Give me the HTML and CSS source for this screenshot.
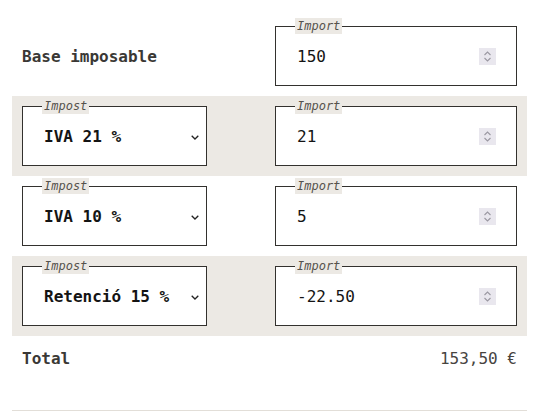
FILE: index.html
```html
<!DOCTYPE html>
<html lang="ca">
<head>
<meta charset="utf-8">
<title>Impostos</title>
<link rel="stylesheet" href="styles.css">
</head>
<body>
<div class="sheet">
  <div class="row">
    <div class="row-label">Base imposable</div>
    <div class="field">
      <span class="legend">Import</span>
      <span class="value">150</span>
      <span class="spin"><svg viewBox="0 0 17 17" width="17" height="17"><path d="M5.5 7 L8.5 4 L11.5 7 M5.5 10 L8.5 13 L11.5 10" fill="none" stroke="#9a98a2" stroke-width="1.1"/></svg></span>
    </div>
  </div>
  <div class="row alt">
    <div class="field select">
      <span class="legend">Impost</span>
      <span class="value strong">IVA 21 %</span>
      <span class="chev"><svg viewBox="0 0 8 5" width="8" height="5"><path d="M0.7 0.7 L4 4 L7.3 0.7" fill="none" stroke="#222" stroke-width="1.3"/></svg></span>
    </div>
    <div class="field">
      <span class="legend">Import</span>
      <span class="value">21</span>
      <span class="spin"><svg viewBox="0 0 17 17" width="17" height="17"><path d="M5.5 7 L8.5 4 L11.5 7 M5.5 10 L8.5 13 L11.5 10" fill="none" stroke="#9a98a2" stroke-width="1.1"/></svg></span>
    </div>
  </div>
  <div class="row">
    <div class="field select">
      <span class="legend">Impost</span>
      <span class="value strong">IVA 10 %</span>
      <span class="chev"><svg viewBox="0 0 8 5" width="8" height="5"><path d="M0.7 0.7 L4 4 L7.3 0.7" fill="none" stroke="#222" stroke-width="1.3"/></svg></span>
    </div>
    <div class="field">
      <span class="legend">Import</span>
      <span class="value">5</span>
      <span class="spin"><svg viewBox="0 0 17 17" width="17" height="17"><path d="M5.5 7 L8.5 4 L11.5 7 M5.5 10 L8.5 13 L11.5 10" fill="none" stroke="#9a98a2" stroke-width="1.1"/></svg></span>
    </div>
  </div>
  <div class="row alt">
    <div class="field select">
      <span class="legend">Impost</span>
      <span class="value strong">Retenció 15 %</span>
      <span class="chev"><svg viewBox="0 0 8 5" width="8" height="5"><path d="M0.7 0.7 L4 4 L7.3 0.7" fill="none" stroke="#222" stroke-width="1.3"/></svg></span>
    </div>
    <div class="field">
      <span class="legend">Import</span>
      <span class="value">-22.50</span>
      <span class="spin"><svg viewBox="0 0 17 17" width="17" height="17"><path d="M5.5 7 L8.5 4 L11.5 7 M5.5 10 L8.5 13 L11.5 10" fill="none" stroke="#9a98a2" stroke-width="1.1"/></svg></span>
    </div>
  </div>
  <div class="total">
    <span class="total-label">Total</span>
    <span class="total-value">153,50 €</span>
  </div>
  <div class="rule"></div>
</div>
</body>
</html>
```
FILE: styles.css
```css
html, body {
  margin: 0;
  padding: 0;
  background: #ffffff;
}
body {
  font-family: "DejaVu Sans Mono", "Liberation Mono", monospace;
  color: #2f2d2a;
}
.sheet {
  padding: 16px 8px 0 12px;
}
.row {
  display: grid;
  grid-template-columns: 185px 242px;
  column-gap: 68px;
  align-items: center;
  height: 80px;
  padding: 0 10px;
  box-sizing: border-box;
}
.row.alt {
  background: #ece9e4;
}
.row-label {
  font-size: 16px;
  font-weight: bold;
  color: #3a3835;
}
.field {
  position: relative;
  height: 60px;
  box-sizing: border-box;
  border: 1px solid #33312e;
  background: #ffffff;
  display: flex;
  align-items: center;
  padding: 0 20px 0 21px;
}
.row-label + .field {
  grid-column: 2;
}
.legend {
  position: absolute;
  top: -9px;
  left: 19px;
  height: 16px;
  line-height: 16px;
  padding: 0 2px;
  background: #ece9e4;
  font-size: 12px;
  font-style: italic;
  color: #55524d;
}
.value {
  flex: 1;
  font-size: 16px;
  color: #141414;
}
.value.strong {
  font-weight: bold;
}
.select {
  padding-right: 7px;
}
.chev {
  display: flex;
  width: 8px;
  height: 5px;
  margin-top: 2px;
}
.spin {
  display: flex;
  width: 17px;
  height: 17px;
  background: #e9e7ee;
}
.total {
  display: flex;
  justify-content: space-between;
  align-items: center;
  height: 44px;
  padding: 0 10px;
  font-size: 16px;
}
.total-label {
  font-weight: bold;
  color: #3a3835;
}
.total-value {
  color: #47443f;
}
.rule {
  margin-top: 30px;
  height: 1px;
  background: #e2ded8;
}
```
